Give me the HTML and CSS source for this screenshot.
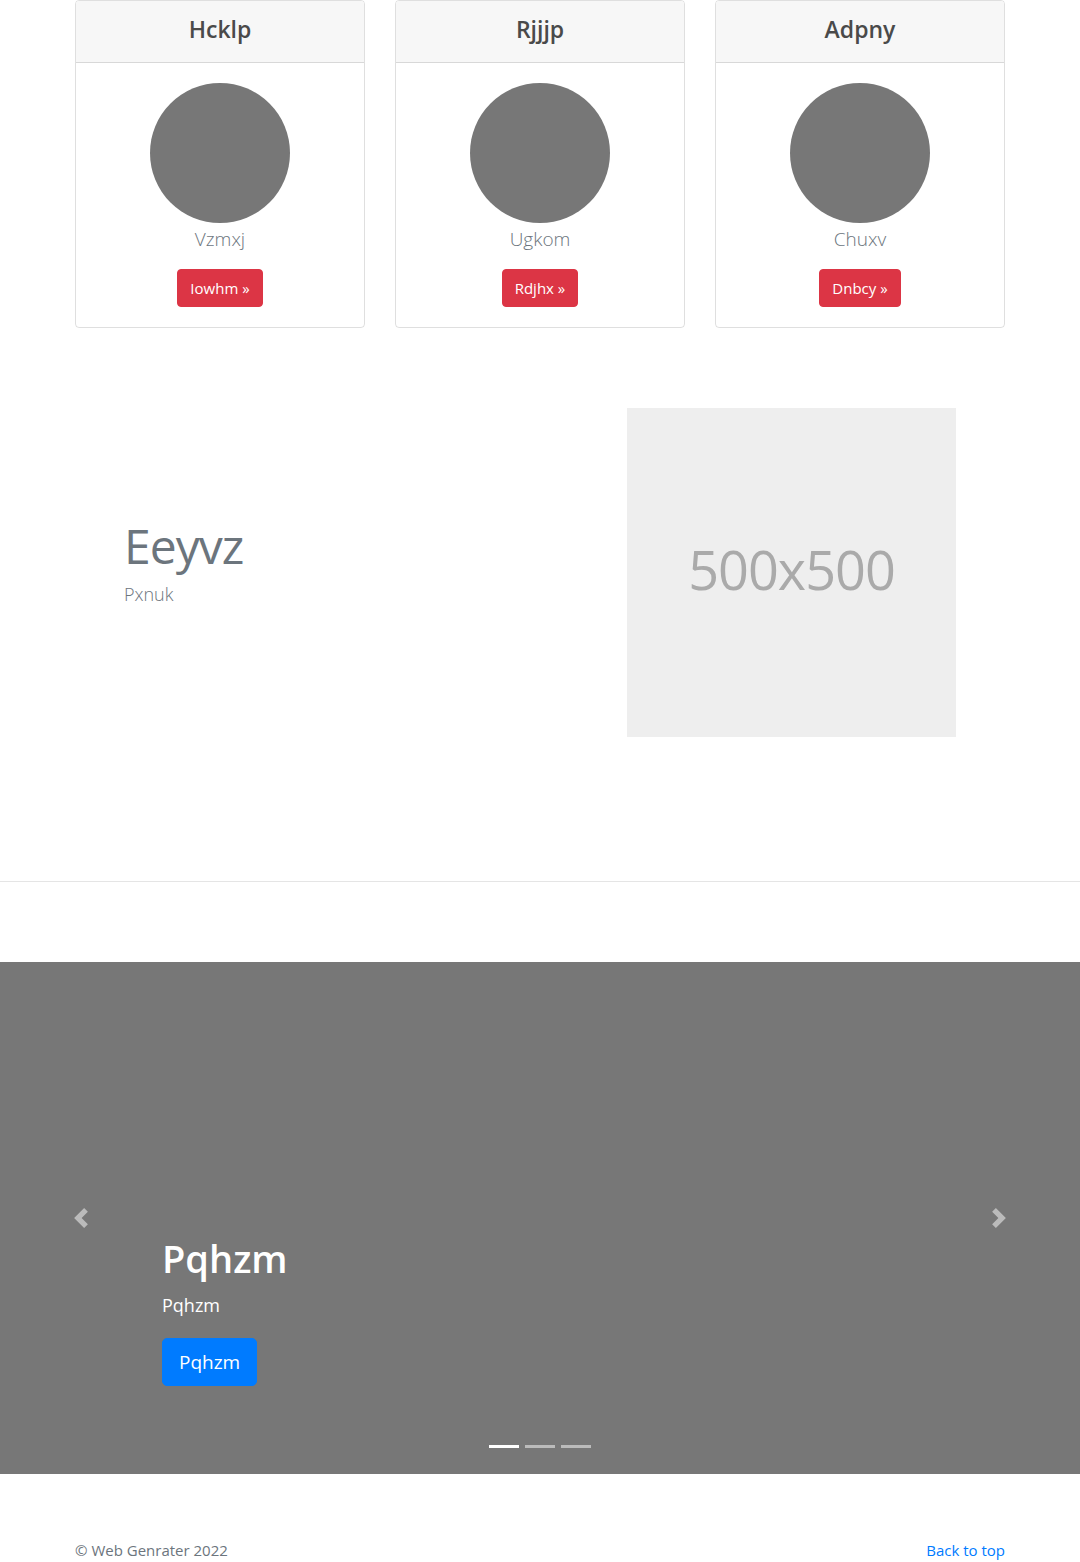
FILE: index.html
```html
<!DOCTYPE html>
<html lang="en">
<head>
<meta charset="utf-8">
<title>Page</title>
<link rel="stylesheet" href="styles.css">
</head>
<body>
<main>
  <section class="container cards">
    <div class="card">
      <div class="card-header"><h4 class="card-title">Hcklp</h4></div>
      <div class="card-body">
        <div class="avatar"></div>
        <p class="name">Vzmxj</p>
        <a class="btn btn-danger" href="#">Iowhm &raquo;</a>
      </div>
    </div>
    <div class="card">
      <div class="card-header"><h4 class="card-title">Rjjjp</h4></div>
      <div class="card-body">
        <div class="avatar"></div>
        <p class="name">Ugkom</p>
        <a class="btn btn-danger" href="#">Rdjhx &raquo;</a>
      </div>
    </div>
    <div class="card">
      <div class="card-header"><h4 class="card-title">Adpny</h4></div>
      <div class="card-body">
        <div class="avatar"></div>
        <p class="name">Chuxv</p>
        <a class="btn btn-danger" href="#">Dnbcy &raquo;</a>
      </div>
    </div>
  </section>

  <section class="container featurette">
    <div class="feat-text">
      <h2 class="feat-heading">Eeyvz</h2>
      <p class="lead">Pxnuk</p>
    </div>
    <div class="feat-image"><span>500x500</span></div>
  </section>

  <hr class="divider">

  <section class="carousel">
    <a class="control control-prev" href="#">
      <svg width="20" height="20" viewBox="0 0 8 8" fill="#fff"><path d="M5.25 0l-4 4 4 4 1.5-1.5L4.25 4l2.5-2.5L5.25 0z"/></svg>
    </a>
    <div class="caption">
      <h1>Pqhzm</h1>
      <p class="caption-text">Pqhzm</p>
      <p><a class="btn btn-lg btn-primary" href="#">Pqhzm</a></p>
    </div>
    <a class="control control-next" href="#">
      <svg width="20" height="20" viewBox="0 0 8 8" fill="#fff"><path d="M2.75 0l-1.5 1.5L3.75 4l-2.5 2.5L2.75 8l4-4-4-4z"/></svg>
    </a>
    <ol class="indicators">
      <li class="active"></li>
      <li></li>
      <li></li>
    </ol>
  </section>

  <footer class="container footer">
    <p class="copy">&copy; Web Genrater 2022</p>
    <p><a href="#">Back to top</a></p>
  </footer>
</main>
</body>
</html>
```

FILE: styles.css
```css
* { box-sizing: border-box; }
html, body { margin: 0; padding: 0; }
body {
  font-family: "Open Sans", "Noto Sans", "Liberation Sans", sans-serif;
  font-size: 16px;
  line-height: 1.5;
  color: #212529;
  background: #fff;
}
a { text-decoration: none; }

.container {
  width: 930px;
  margin: 0 auto;
}

/* cards */
.cards {
  display: flex;
  gap: 30px;
}
.card {
  flex: 1;
  border: 1px solid rgba(0,0,0,.125);
  border-radius: 4px;
  text-align: center;
  overflow: hidden;
}
.card-header {
  background: #f7f7f7;
  border-bottom: 1px solid rgba(0,0,0,.125);
  padding: 12px 20px;
}
.card-title {
  margin: 2px 0 6px;
  font-size: 23px;
  line-height: 28.8px;
  font-weight: 600;
  color: #4a4a4a;
}
.card-body {
  padding: 20px;
  display: flex;
  flex-direction: column;
  align-items: center;
}
.avatar {
  width: 140px;
  height: 140px;
  border-radius: 50%;
  background: #777;
}
.name {
  margin: 1px 0 15px;
  font-size: 19px;
  line-height: 30px;
  font-weight: 300;
  color: #6c757d;
}
.btn {
  display: inline-block;
  font-size: 15px;
  line-height: 24px;
  padding: 6px 12px;
  border-radius: 4px;
  border: 1px solid transparent;
  color: #fff;
}
.btn-danger { background: #dc3545; border-color: #dc3545; }
.btn-primary { background: #007bff; border-color: #007bff; }
.btn-lg {
  font-size: 19px;
  line-height: 30px;
  padding: 8px 16px;
  border-radius: 5px;
}

/* featurette */
.featurette {
  display: flex;
  align-items: center;
  margin-top: 80px;
}
.feat-text {
  width: 552px;
  padding-left: 49px;
}
.feat-heading {
  margin: 0 0 6px;
  font-size: 48px;
  line-height: 1.1;
  font-weight: 400;
  letter-spacing: -1px;
  color: #6c757d;
}
.lead {
  margin: 0 0 16px;
  font-size: 18px;
  line-height: 30px;
  font-weight: 300;
  color: #6c757d;
}
.feat-image {
  width: 329px;
  height: 329px;
  background: #eee;
  display: flex;
  align-items: center;
  justify-content: center;
  padding-bottom: 6px;
}
.feat-image span {
  font-size: 54px;
  color: #aaa;
  letter-spacing: -1px;
}

.divider {
  margin: 144px 0 80px;
  border: 0;
  border-top: 1px solid rgba(0,0,0,.1);
}

/* carousel */
.carousel {
  position: relative;
  height: 512px;
  background: #777;
  margin-bottom: 64px;
  display: flex;
  align-items: center;
}
.control {
  width: 15%;
  align-self: stretch;
  display: flex;
  align-items: center;
  justify-content: center;
  opacity: .5;
}
.caption {
  flex: 1;
  align-self: flex-end;
  padding: 20px 0;
  margin-bottom: 52px;
  color: #fff;
}
.caption h1 {
  margin: 0 0 8px;
  font-size: 38px;
  line-height: 48px;
  font-weight: 600;
}
.caption p { margin: 0 0 16px; }
.caption .caption-text {
  margin: 0 0 18px;
  font-size: 18px;
  line-height: 30px;
}
.indicators {
  position: absolute;
  left: 0;
  right: 0;
  bottom: 0;
  margin: 0 15% 16px;
  padding: 0;
  list-style: none;
  display: flex;
  justify-content: center;
}
.indicators li {
  width: 30px;
  height: 3px;
  margin: 0 3px;
  box-sizing: content-box;
  border-top: 10px solid transparent;
  border-bottom: 10px solid transparent;
  background: #fff;
  background-clip: padding-box;
  opacity: .5;
}
.indicators li.active { opacity: 1; }

/* footer */
.footer {
  display: flex;
  justify-content: space-between;
}
.footer p { margin: 0 0 16px; font-size: 15px; line-height: 24px; }
.copy { color: #6c757d; }
.footer a { color: #007bff; }
```
